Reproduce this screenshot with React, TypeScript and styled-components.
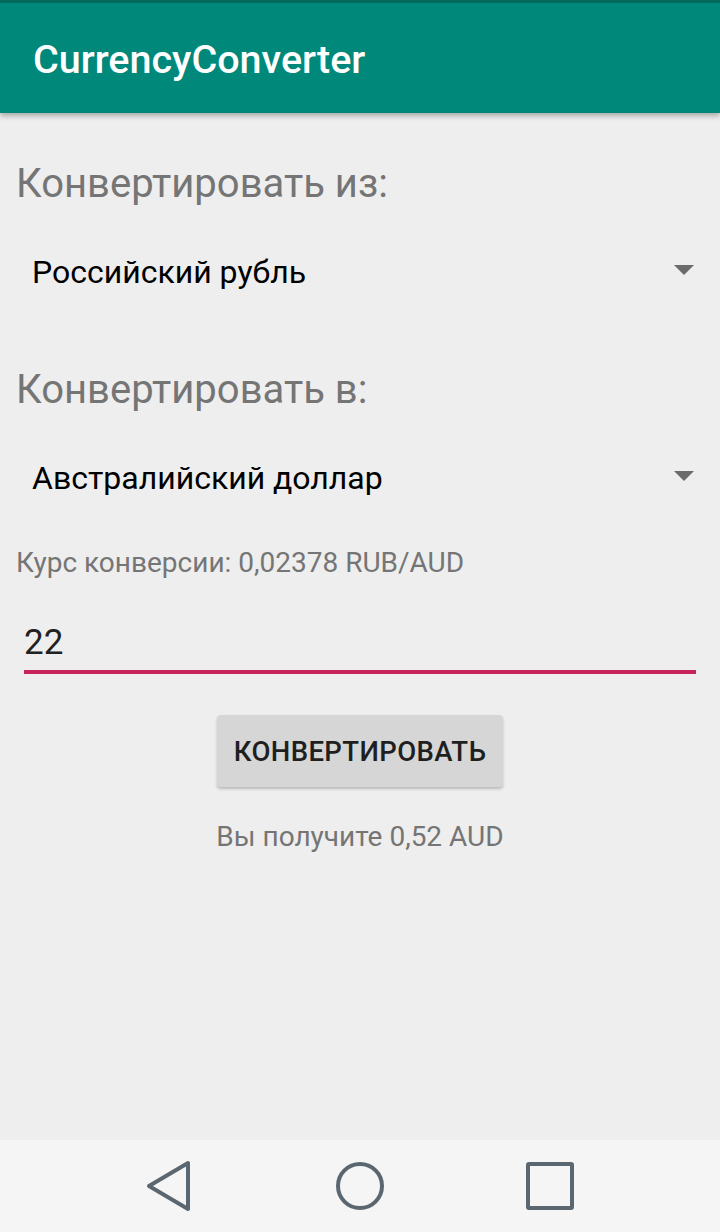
import React from "react";
import styled, { createGlobalStyle } from "styled-components";

const Global = createGlobalStyle`
  html, body { margin: 0; padding: 0; background: #eeeeee; }
  body { font-family: Roboto, "Noto Sans", "Liberation Sans", sans-serif; }
  * { box-sizing: border-box; }
`;

const Screen = styled.div`
  width: 720px;
  height: 1232px;
  display: flex;
  flex-direction: column;
  background: #eeeeee;
  overflow: hidden;
`;

const Toolbar = styled.header`
  height: 113px;
  border-top: 3px solid #00695c;
  background: #00897b;
  display: flex;
  align-items: center;
  padding: 4px 0 0 33px;
  box-shadow: 0 3px 5px rgba(0, 0, 0, 0.28);
  position: relative;
  z-index: 1;
`;

const Title = styled.h1`
  margin: 0;
  font-size: 39.5px;
  font-weight: 500;
  color: #ffffff;
  line-height: 46px;
`;

const Main = styled.main`
  flex: 1;
  display: flex;
  flex-direction: column;
  padding: 0 16px;
`;

const Label = styled.div<{ $top: number }>`
  margin-top: ${(p) => p.$top}px;
  font-size: 40px;
  line-height: 48px;
  color: #757575;
`;

const Spinner = styled.div`
  height: 96px;
  margin-top: 16px;
  display: flex;
  align-items: center;
  justify-content: space-between;
  padding: 0 10px 0 16px;
`;

const SpinnerText = styled.span`
  font-size: 32px;
  color: #000000;
`;

const Arrow = styled.span`
  width: 0;
  height: 0;
  border-left: 10px solid transparent;
  border-right: 10px solid transparent;
  border-top: 10px solid #6b6b6b;
  margin-top: -4px;
`;

const Rate = styled.div`
  margin-top: 20px;
  font-size: 28px;
  line-height: 33px;
  color: #757575;
`;

const Input = styled.div`
  margin: 44px 8px 0;
  padding-bottom: 7px;
  border-bottom: 4px solid #c8235d;
  font-size: 35px;
  line-height: 40px;
  color: #212121;
`;

const Button = styled.button`
  align-self: center;
  margin-top: 41px;
  width: 286px;
  height: 72px;
  border: none;
  border-radius: 4px;
  background: #d6d6d6;
  box-shadow: 0 2px 3px rgba(0, 0, 0, 0.22);
  font-family: inherit;
  font-size: 27.5px;
  font-weight: 500;
  color: #1f1f1f;
  letter-spacing: 0.4px;
  padding: 0;
`;

const Result = styled.div`
  margin-top: 34px;
  text-align: center;
  font-size: 28px;
  line-height: 32px;
  color: #757575;
`;

const NavBar = styled.nav`
  height: 92px;
  background: #f5f5f5;
  display: flex;
  align-items: center;
  justify-content: center;
`;

const NavSlot = styled.div`
  width: 190px;
  display: flex;
  justify-content: center;
`;

const navColor = "#5b6770";

export default function App() {
  return (
    <>
      <Global />
      <Screen>
        <Toolbar>
          <Title>CurrencyConverter</Title>
        </Toolbar>
        <Main>
          <Label $top={47}>Конвертировать из:</Label>
          <Spinner>
            <SpinnerText>Российский рубль</SpinnerText>
            <Arrow />
          </Spinner>
          <Label $top={46}>Конвертировать в:</Label>
          <Spinner>
            <SpinnerText>Австралийский доллар</SpinnerText>
            <Arrow />
          </Spinner>
          <Rate>Курс конверсии: 0,02378 RUB/AUD</Rate>
          <Input>22</Input>
          <Button>КОНВЕРТИРОВАТЬ</Button>
          <Result>Вы получите 0,52 AUD</Result>
        </Main>
        <NavBar>
          <NavSlot>
            <svg width="48" height="52" viewBox="0 0 48 52">
              <path d="M42 3 L42 49 L3 26 Z" fill="none" stroke={navColor} strokeWidth="4" strokeLinejoin="round" />
            </svg>
          </NavSlot>
          <NavSlot>
            <svg width="52" height="52" viewBox="0 0 52 52">
              <circle cx="26" cy="26" r="22" fill="none" stroke={navColor} strokeWidth="4" />
            </svg>
          </NavSlot>
          <NavSlot>
            <svg width="52" height="52" viewBox="0 0 52 52">
              <rect x="4" y="4" width="44" height="44" fill="none" stroke={navColor} strokeWidth="4" rx="1" />
            </svg>
          </NavSlot>
        </NavBar>
      </Screen>
    </>
  );
}
